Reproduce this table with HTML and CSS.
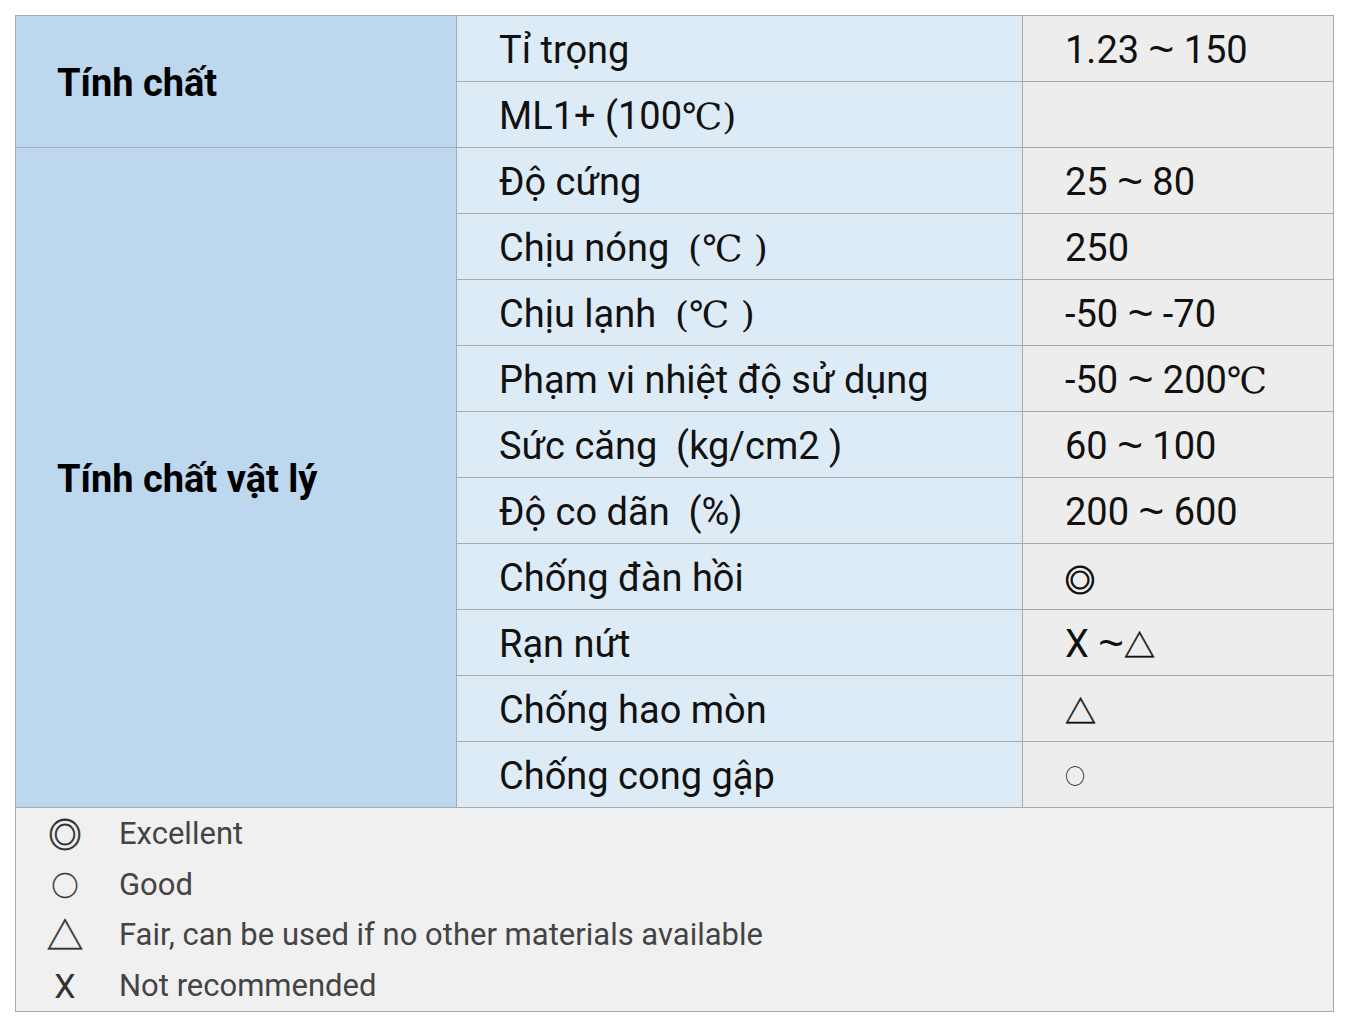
FILE: index.html
```html
<!DOCTYPE html>
<html lang="vi">
<head>
<meta charset="utf-8">
<title>Tính chất</title>
<link rel="stylesheet" href="styles.css">
</head>
<body>
<div class="sheet">
  <div class="grid">
    <div class="head head-1"><span>Tính chất</span></div>
    <div class="name"><span>Tỉ trọng</span></div>
    <div class="val"><span>1.23 <span class="tl">~</span> 150</span></div>
    <div class="name"><span>ML1+ (100<span class="sf">℃)</span></span></div>
    <div class="val"></div>

    <div class="head head-2"><span>Tính chất vật lý</span></div>
    <div class="name"><span>Độ cứng</span></div>
    <div class="val"><span>25 <span class="tl">~</span> 80</span></div>
    <div class="name"><span>Chịu nóng &nbsp;<span class="sf">(℃ )</span></span></div>
    <div class="val"><span>250</span></div>
    <div class="name"><span>Chịu lạnh &nbsp;<span class="sf">(℃ )</span></span></div>
    <div class="val"><span>-50 <span class="tl">~</span> -70</span></div>
    <div class="name"><span>Phạm vi nhiệt độ sử dụng</span></div>
    <div class="val"><span>-50 <span class="tl">~</span> 200<span class="sf">℃</span></span></div>
    <div class="name"><span>Sức căng &nbsp;(kg/cm2 )</span></div>
    <div class="val"><span>60 <span class="tl">~</span> 100</span></div>
    <div class="name"><span>Độ co dãn &nbsp;(%)</span></div>
    <div class="val"><span>200 <span class="tl">~</span> 600</span></div>
    <div class="name"><span>Chống đàn hồi</span></div>
    <div class="val"><span class="sym sym-dbl">◎</span></div>
    <div class="name"><span>Rạn nứt</span></div>
    <div class="val"><span>X <span class="tl">~</span><span class="sym sym-tri">△</span></span></div>
    <div class="name"><span>Chống hao mòn</span></div>
    <div class="val"><span class="sym sym-tri">△</span></div>
    <div class="name"><span>Chống cong gập</span></div>
    <div class="val"><span class="sym sym-cir">○</span></div>
  </div>
  <div class="legend">
    <div class="lg-row"><span class="lg-sym"><span class="sym lg-dbl">◎</span></span><span class="lg-text">Excellent</span></div>
    <div class="lg-row"><span class="lg-sym"><span class="sym lg-cir">○</span></span><span class="lg-text">Good</span></div>
    <div class="lg-row"><span class="lg-sym"><span class="sym lg-tri">△</span></span><span class="lg-text">Fair, can be used if no other materials available</span></div>
    <div class="lg-row"><span class="lg-sym"><span class="lg-x">X</span></span><span class="lg-text">Not recommended</span></div>
  </div>
</div>
</body>
</html>
```

FILE: styles.css
```css
html, body {
  margin: 0;
  padding: 0;
  background: #ffffff;
}

body {
  font-family: Roboto, "Liberation Sans", "Noto Sans CJK JP", sans-serif;
  color: #111111;
}

.sheet {
  margin: 15px 0 0 15px;
  width: 1319px;
  border: 1px solid #aaaaaa;
  box-sizing: border-box;
}

.grid {
  display: grid;
  grid-template-columns: 440px 565px 310px;
  grid-template-rows: repeat(12, 65px);
  gap: 1px;
  background: #aaaaaa;
  border-bottom: 1px solid #aaaaaa;
}

.grid > div {
  display: flex;
  align-items: center;
  white-space: nowrap;
  font-size: 38px;
  padding-top: 2px;
  box-sizing: border-box;
}

.head {
  grid-column: 1;
  background: #bdd7ee;
  font-weight: 700;
  padding-left: 41px;
  color: #000000;
}

.head-1 { grid-row: 1 / span 2; }
.head-2 { grid-row: 3 / span 10; }

.name {
  background: #ddebf7;
  padding-left: 42px;
}

.val {
  background: #ededed;
  padding-left: 42px;
}

.sf {
  font-family: "DejaVu Serif", "Liberation Serif", serif;
  font-size: 36px;
}

.tl {
  font-family: "Liberation Sans", sans-serif;
  font-size: 44px;
  line-height: 0;
  vertical-align: -1px;
}

.sym {
  font-family: "Noto Sans CJK JP", "DejaVu Sans", sans-serif;
  line-height: 1;
  display: inline-block;
}

.sym-dbl { font-size: 30px; -webkit-text-stroke: 1.2px #111111; }
.sym-tri { font-size: 31px; -webkit-text-stroke: 0.5px #111111; }
.sym-cir { font-size: 20px; }

.legend {
  background: #f0f0f0;
  height: 203px;
  display: grid;
  grid-template-rows: repeat(4, 1fr);
}

.lg-row {
  display: flex;
  align-items: center;
  font-size: 31px;
  color: #444444;
}

.lg-sym {
  width: 98px;
  display: flex;
  justify-content: center;
  align-items: center;
  color: #333333;
}

.lg-dbl { font-size: 33px; -webkit-text-stroke: 0.8px #333333; }
.lg-cir { font-size: 27px; -webkit-text-stroke: 0.4px #333333; }
.lg-tri { font-size: 37px; -webkit-text-stroke: 0.4px #333333; }
.lg-x { font-size: 34px; font-family: Roboto, sans-serif; font-weight: 400; }

.lg-text {
  white-space: nowrap;
  padding-left: 5px;
}
```
